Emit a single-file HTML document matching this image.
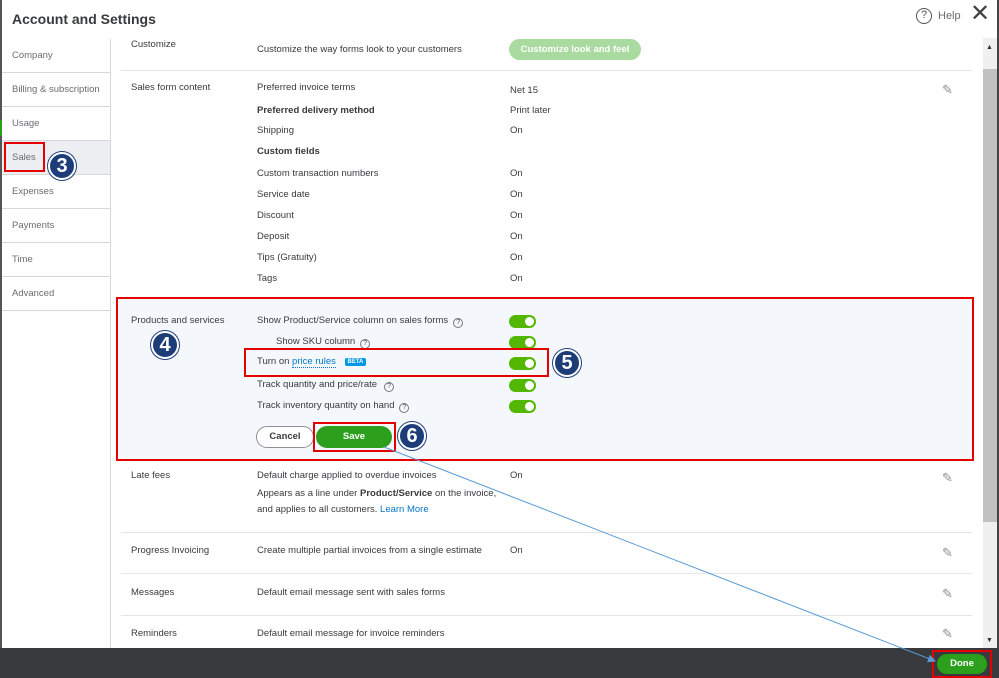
<!DOCTYPE html>
<html><head><style>
*{margin:0;padding:0;box-sizing:border-box}
body{width:999px;height:678px;position:relative;overflow:hidden;background:#fff;font-family:"Liberation Sans",sans-serif;font-size:9.5px;color:#393a3d}
.a{position:absolute;white-space:nowrap}
.nav{position:absolute;left:2px;width:108px;height:34px;border-bottom:1px solid #d4d7dc;color:#6b6c72;padding:0 0 0 10px;line-height:34px;font-size:9.5px}
.sep{position:absolute;left:121px;width:851px;height:1px;background:#e3e5e8}
.tg{position:absolute;left:509px;width:27px;height:13px;border-radius:7px;background:#53b700}
.tg:after{content:"";position:absolute;right:2px;top:2px;width:9px;height:9px;border-radius:50%;background:#fff}
.q{display:inline-block;width:10px;height:10px;border:1px solid #777;border-radius:50%;font-size:7px;text-align:center;line-height:8px;margin-left:5px;color:#555;vertical-align:-1px}
.c{position:absolute;width:28px;height:28px;border-radius:50%;background:#1d3d78;border:2px solid #fff;box-shadow:0 0 0 1px #1d3d78;color:#fff;font-weight:bold;font-size:20px;text-align:center;line-height:24px}
.pen{position:absolute;left:942px;font-size:13px;color:#8d9096}
.red{position:absolute;border:2px solid #e50000}
</style></head><body>
<div class="a" style="left:0;top:0;width:2px;height:648px;background:#555"></div>
<div class="a" style="left:0;top:120px;width:2px;height:16px;background:#2ca01c"></div>
<div class="a" style="left:12px;top:11px;font-size:14px;font-weight:bold;color:#393a3d">Account and Settings</div>
<div class="a" style="left:916px;top:8px;width:16px;height:16px;border:1.5px solid #555;border-radius:50%;text-align:center;font-size:11px;line-height:13px;color:#555">?</div>
<div class="a" style="left:938px;top:10px;font-size:11px;color:#6b6c72">Help</div>
<div class="a" style="left:970px;top:2px;font-size:24px;color:#444;line-height:24px">✕</div>
<div class="a" style="left:110px;top:39px;width:1px;height:609px;background:#d4d7dc"></div>
<div class="nav" style="top:39px">Company</div>
<div class="nav" style="top:73px">Billing &amp; subscription</div>
<div class="nav" style="top:107px">Usage</div>
<div class="nav" style="top:141px;background:#eceef1">Sales</div>
<div class="nav" style="top:175px">Expenses</div>
<div class="nav" style="top:209px">Payments</div>
<div class="nav" style="top:243px">Time</div>
<div class="nav" style="top:277px">Advanced</div>
<div class="red" style="left:4px;top:142px;width:41px;height:30px"></div>
<div class="c" style="left:48px;top:152px">3</div>

<div class="a" style="left:131px;top:39px">Customize</div>
<div class="a" style="left:257px;top:44px">Customize the way forms look to your customers</div>
<div class="a" style="left:509px;top:39px;width:132px;height:21px;border-radius:11px;background:#a9dba0;color:#fff;font-weight:bold;text-align:center;line-height:21px">Customize look and feel</div>
<div class="sep" style="top:70px"></div>
<div class="a" style="left:131px;top:82px">Sales form content</div>
<div class="pen" style="top:82px">✎</div>
<div class="a" style="left:257px;top:82px">Preferred invoice terms</div><div class="a" style="left:510px;top:85px">Net 15</div>
<div class="a" style="left:257px;top:105px;font-weight:bold">Preferred delivery method</div><div class="a" style="left:510px;top:105px">Print later</div>
<div class="a" style="left:257px;top:125px">Shipping</div><div class="a" style="left:510px;top:125px">On</div>
<div class="a" style="left:257px;top:146px;font-weight:bold">Custom fields</div>
<div class="a" style="left:257px;top:168px">Custom transaction numbers</div><div class="a" style="left:510px;top:168px">On</div>
<div class="a" style="left:257px;top:189px">Service date</div><div class="a" style="left:510px;top:189px">On</div>
<div class="a" style="left:257px;top:210px">Discount</div><div class="a" style="left:510px;top:210px">On</div>
<div class="a" style="left:257px;top:231px">Deposit</div><div class="a" style="left:510px;top:231px">On</div>
<div class="a" style="left:257px;top:252px">Tips (Gratuity)</div><div class="a" style="left:510px;top:252px">On</div>
<div class="a" style="left:257px;top:273px">Tags</div><div class="a" style="left:510px;top:273px">On</div>

<div class="a" style="left:118px;top:299px;width:854px;height:160px;background:#f4f8fc"></div>
<div class="red" style="left:116px;top:297px;width:858px;height:164px"></div>
<div class="a" style="left:131px;top:315px">Products and services</div>
<div class="c" style="left:151px;top:331px">4</div>
<div class="a" style="left:257px;top:315px">Show Product/Service column on sales forms<span class="q">?</span></div><div class="tg" style="top:315px"></div>
<div class="a" style="left:276px;top:336px">Show SKU column<span class="q">?</span></div><div class="tg" style="top:336px"></div>
<div class="a" style="left:257px;top:356px">Turn on <span style="color:#0077c5;border-bottom:1px dotted #0077c5">price rules</span> <span style="display:inline-block;background:#0097e6;color:#fff;font-size:6px;font-weight:bold;padding:1px 3px;border-radius:2px;margin-left:6px;vertical-align:1px">BETA</span></div><div class="tg" style="top:357px"></div>
<div class="red" style="left:244px;top:348px;width:305px;height:29px"></div>
<div class="c" style="left:553px;top:349px">5</div>
<div class="a" style="left:257px;top:379px">Track quantity and price/rate<span class="q" style="margin-left:7px">?</span></div><div class="tg" style="top:379px"></div>
<div class="a" style="left:257px;top:400px">Track inventory quantity on hand<span class="q">?</span></div><div class="tg" style="top:400px"></div>
<div class="a" style="left:256px;top:426px;width:58px;height:22px;border:1px solid #8d9096;border-radius:11px;background:#fff;text-align:center;line-height:20px;font-weight:bold;color:#393a3d">Cancel</div>
<div class="a" style="left:316px;top:426px;width:76px;height:22px;border-radius:11px;background:#2ca01c;color:#fff;text-align:center;line-height:22px;font-weight:bold">Save</div>
<div class="red" style="left:313px;top:422px;width:83px;height:30px"></div>
<div class="c" style="left:398px;top:422px">6</div>

<div class="a" style="left:131px;top:470px">Late fees</div>
<div class="pen" style="top:470px">✎</div>
<div class="a" style="left:257px;top:470px">Default charge applied to overdue invoices</div><div class="a" style="left:510px;top:470px">On</div>
<div class="a" style="left:257px;top:488px">Appears as a line under <b>Product/Service</b> on the invoice,</div>
<div class="a" style="left:257px;top:504px">and applies to all customers. <span style="color:#0077c5">Learn More</span></div>
<div class="sep" style="top:532px"></div>
<div class="a" style="left:131px;top:545px">Progress Invoicing</div>
<div class="a" style="left:257px;top:545px">Create multiple partial invoices from a single estimate</div><div class="a" style="left:510px;top:545px">On</div>
<div class="pen" style="top:545px">✎</div>
<div class="sep" style="top:573px"></div>
<div class="a" style="left:131px;top:587px">Messages</div>
<div class="a" style="left:257px;top:587px">Default email message sent with sales forms</div>
<div class="pen" style="top:586px">✎</div>
<div class="sep" style="top:615px"></div>
<div class="a" style="left:131px;top:628px">Reminders</div>
<div class="a" style="left:257px;top:628px">Default email message for invoice reminders</div>
<div class="pen" style="top:626px">✎</div>

<div class="a" style="left:983px;top:38px;width:15px;height:610px;background:#f0f0f0"></div>
<div class="a" style="left:983px;top:69px;width:14px;height:453px;background:#c1c1c1"></div>
<div class="a" style="left:986px;top:44px;font-size:7px;color:#333">▲</div>
<div class="a" style="left:986px;top:637px;font-size:7px;color:#333">▼</div>
<div class="a" style="left:997px;top:0;width:2px;height:678px;background:#444"></div>

<div class="a" style="left:0;top:648px;width:999px;height:30px;background:#393a3d"></div>
<div class="a" style="left:937px;top:654px;width:50px;height:20px;border-radius:10px;background:#2ca01c;color:#fff;font-weight:bold;text-align:center;line-height:20px">Done</div>
<div class="red" style="left:932px;top:650px;width:60px;height:28px"></div>
<svg class="a" style="left:0;top:0" width="999" height="678"><defs><marker id="m" markerWidth="8" markerHeight="8" refX="7" refY="4" orient="auto"><path d="M0,0L8,4L0,8z" fill="#5b9bd5"/></marker></defs><line x1="384" y1="447" x2="935" y2="661" stroke="#5b9bd5" stroke-width="1" marker-end="url(#m)"/></svg>
</body></html>
